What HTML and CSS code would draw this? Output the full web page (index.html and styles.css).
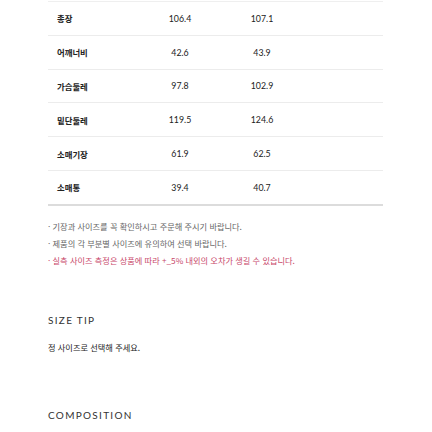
FILE: index.html
```
<!DOCTYPE html>
<html lang="ko">
<head>
<meta charset="utf-8">
<link rel="stylesheet" href="styles.css">
</head>
<body>
<div class="wrap">
  <div class="table">
    <div class="row"><span class="label">총장</span><span class="num">106.4</span><span class="num">107.1</span><span></span></div>
    <div class="row"><span class="label">어깨너비</span><span class="num">42.6</span><span class="num">43.9</span><span></span></div>
    <div class="row"><span class="label">가슴둘레</span><span class="num">97.8</span><span class="num">102.9</span><span></span></div>
    <div class="row"><span class="label">밑단둘레</span><span class="num">119.5</span><span class="num">124.6</span><span></span></div>
    <div class="row"><span class="label">소매기장</span><span class="num">61.9</span><span class="num">62.5</span><span></span></div>
    <div class="row last"><span class="label">소매통</span><span class="num">39.4</span><span class="num">40.7</span><span></span></div>
  </div>
  <ul class="notes">
    <li>· 기장과 사이즈를 꼭 확인하시고 주문해 주시기 바랍니다.</li>
    <li>· 제품의 각 부분별 사이즈에 유의하여 선택 바랍니다.</li>
    <li class="warn">· 실측 사이즈 측정은 상품에 따라 +_5% 내외의 오차가 생길 수 있습니다.</li>
  </ul>
  <section class="tip">
    <h2 class="title">SIZE TIP</h2>
    <p class="tip-text">정 사이즈로 선택해 주세요.</p>
  </section>
  <section class="comp">
    <h2 class="title">COMPOSITION</h2>
  </section>
</div>
</body>
</html>
```
FILE: styles.css
```
html, body {
  margin: 0;
  padding: 0;
  background: #fff;
}
body {
  font-family: "Lato", "Noto Sans CJK KR", sans-serif;
  color: #333;
}
.wrap {
  width: 335px;
  margin-left: 48px;
  padding-top: 1px;
}
.table {
  border-top: 1px solid #efefef;
}
.row {
  display: grid;
  grid-template-columns: 98px 68px 96px 1fr;
  align-items: center;
  height: 32.8px;
  border-bottom: 1px solid #ececec;
  font-size: 8.8px;
}
.row.last {
  border-bottom: 2px solid #dcdcdc;
}
.label {
  padding-left: 9px;
  font-family: "Noto Sans CJK KR", sans-serif;
  font-weight: 700;
  font-size: 8.4px;
  color: #222;
}
.num {
  text-align: center;
  color: #222;
}
.notes {
  list-style: none;
  margin: 12px 0 0;
  padding: 0;
  font-family: "Noto Sans CJK KR", sans-serif;
  font-size: 8.2px;
  line-height: 17px;
  color: #666;
}
.notes .warn {
  color: #c8476a;
}
.tip {
  margin-top: 45px;
}
.title {
  margin: 0;
  font-family: "Lato", sans-serif;
  font-weight: 400;
  font-size: 10px;
  line-height: 12px;
  letter-spacing: 1.3px;
  color: #333;
}
.tip-text {
  margin: 15px 0 0;
  font-family: "Noto Sans CJK KR", sans-serif;
  font-size: 8.2px;
  line-height: 12px;
  color: #222;
}
.comp {
  margin-top: 56px;
}
```
